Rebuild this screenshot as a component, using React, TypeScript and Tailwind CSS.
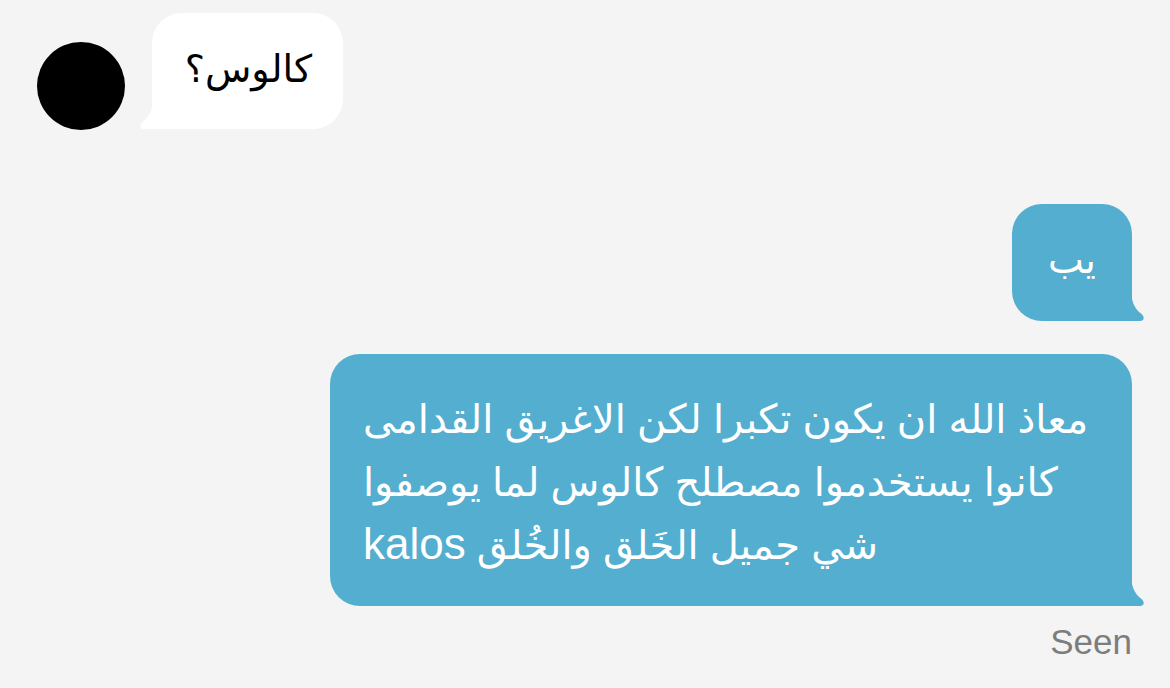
import React from "react";

const font = { fontFamily: '"Liberation Sans", "DejaVu Sans", sans-serif' };

function Tail({ side, color }: { side: "left" | "right"; color: string }) {
  const pos =
    side === "right"
      ? "absolute bottom-0 right-[-13px]"
      : "absolute bottom-0 left-[-13px] -scale-x-100";
  return (
    <svg className={pos} width="14" height="30" viewBox="0 0 14 30">
      <path
        d="M0 0 C0.5 11 4 18 10 22.5 C14 25.5 13.5 30 9 30 L0 30 Z"
        fill={color}
      />
    </svg>
  );
}

export default function App() {
  return (
    <div
      className="w-[1170px] h-[688px] bg-[#f4f4f4] overflow-hidden flex flex-col"
      style={font}
    >
      {/* incoming message */}
      <div className="flex items-end pl-[37px] pt-[13px] gap-[27px]">
        <div className="w-[88px] h-[88px] rounded-full bg-black mb-[-1px]" />
        <div className="relative w-[191px] h-[116px] bg-white rounded-[30px] rounded-bl-none flex items-center justify-center">
          <span dir="rtl" className="text-[38px] leading-none text-black pb-[4px] pl-[2px]">
            كالوس؟
          </span>
          <Tail side="left" color="#ffffff" />
        </div>
      </div>

      {/* outgoing messages */}
      <div className="flex flex-col items-end pr-[38px] mt-[75px]">
        <div className="relative w-[120px] h-[117px] bg-[#53aed0] rounded-[30px] rounded-br-none flex items-center justify-center">
          <span dir="rtl" className="text-[38px] leading-none text-white pb-[6px]">
            يب
          </span>
          <Tail side="right" color="#53aed0" />
        </div>

        <div className="relative mt-[33px] w-[802px] h-[252px] bg-[#53aed0] rounded-[30px] rounded-br-none pl-[33px] pt-[34px] text-white text-[40px] leading-[63px]">
          <div dir="rtl" className="text-left whitespace-nowrap">
            معاذ الله ان يكون تكبرا لكن الاغريق القدامى
          </div>
          <div dir="rtl" className="text-left whitespace-nowrap">
            كانوا يستخدموا مصطلح كالوس لما يوصفوا
          </div>
          <div dir="rtl" className="text-left whitespace-nowrap">
            شي جميل الخَلق والخُلق <span className="text-[44px] leading-none">kalos</span>
          </div>
          <Tail side="right" color="#53aed0" />
        </div>

        <div className="mt-[18px] text-[35px] leading-none text-[#7d7d7d]">Seen</div>
      </div>
    </div>
  );
}
